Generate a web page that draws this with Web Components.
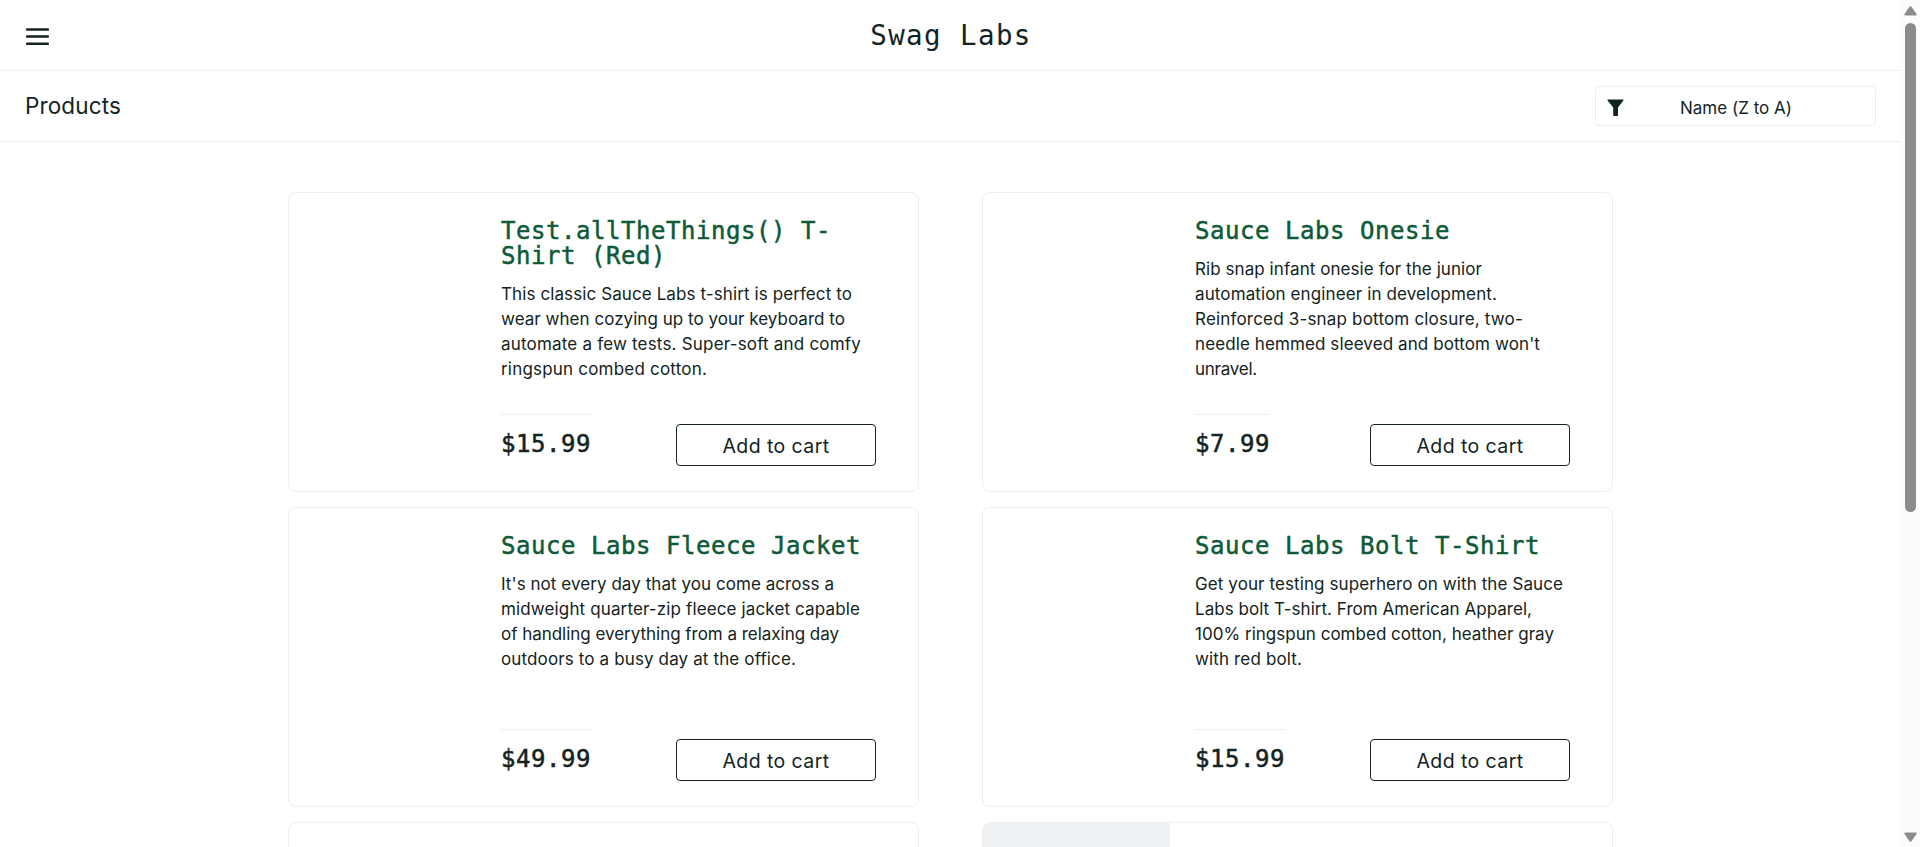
<!DOCTYPE html>
<html lang="en">
<head>
<meta charset="utf-8">
<title>Swag Labs</title>
<style>
html,body{margin:0;height:100%;overflow:hidden;background:#fff}
body{font-family:Inter,"Open Sans",sans-serif;color:#132322}
</style>
</head>
<body>
<swag-app></swag-app>
<script>
const define = (name, html, setup) => customElements.define(name, class extends HTMLElement {
  connectedCallback() {
    if (this.shadowRoot) return;
    const t = document.createElement('template');
    t.innerHTML = html;
    this.attachShadow({mode: 'open'}).append(t.content.cloneNode(true));
    if (setup) setup(this, this.shadowRoot);
  }
});

// One line of text, tracked so that it spans the width given in "w".
define('fit-line', `<style>:host{display:block;white-space:nowrap}span{display:inline-block}</style><span><slot></slot></span>`, (el, root) => {
  const span = root.querySelector('span');
  const n = el.textContent.length;
  const diff = Number(el.getAttribute('w')) - span.getBoundingClientRect().width;
  span.style.letterSpacing = (diff / n).toFixed(4) + 'px';
});

define('burger-icon', `<style>:host{display:block;width:24px;height:18px}svg{display:block}</style>
<svg width="24" height="18" viewBox="0 0 24 18" fill="#132322"><rect y=".2" width="23" height="2.5" rx="1"/><rect y="7.3" width="23" height="2.5" rx="1"/><rect y="14.5" width="23" height="2.5" rx="1"/></svg>`);

define('top-bar', `<style>:host{display:grid;grid-template-columns:1fr auto 1fr;height:70px;border-bottom:1px solid #ededed;padding:0 25px 0 26px}
burger-icon{margin-top:28px}
.logo{font:27.5px/36px "DejaVu Sans Mono",monospace;letter-spacing:1.4px;margin-top:17px;height:36px}</style>
<burger-icon></burger-icon><div class="logo">Swag Labs</div><span></span>`);

define('sort-select', `<style>:host{display:flex;box-sizing:border-box;width:281px;height:40px;border:1px solid #ededed;border-radius:4px;font-size:17px;line-height:42px}
svg{display:block;margin:12px 56px 0 11px;flex:none}</style>
<svg width="17" height="18" viewBox="0 0 17 18"><path d="M1 .5H16Q17 .5 16.4 1.4L11 8.6V16.2Q11 17 10.2 17H7Q6.2 17 6.2 16.2V8.6L.6 1.4Q0 .5 1 .5Z" fill="#132322"/></svg><fit-line w="112">Name (Z to A)</fit-line>`);

define('sub-bar', `<style>:host{display:flex;justify-content:space-between;height:70px;border-bottom:1px solid #ededed;padding:0 25px 0 25px;font-size:22.5px;line-height:28px}
.t{margin-top:21px}sort-select{margin-top:15px}</style>
<fit-line class="t" w="96">Products</fit-line><sort-select></sort-select>`);

define('cart-button', `<style>:host{display:block}button{all:unset;box-sizing:border-box;display:flex;justify-content:center;width:200px;height:42px;border:1px solid #132322;border-radius:4px;font-size:19.5px;line-height:42px}</style>
<button><fit-line w="107">Add to cart</fit-line></button>`);

define('product-card', `<style>:host{display:flex;box-sizing:border-box;width:631px;height:300px;border:1px solid #ededed;border-radius:8px;overflow:hidden;background:#fff}
.img{width:187px;flex:none}:host([tinted]) .img{background:#eef2f4}
.body{display:flex;flex-direction:column;flex:1;padding:26px 42px 25px 25px}
.name{color:#0f5a38;font:24px/25px "DejaVu Sans Mono",monospace;letter-spacing:.55px;-webkit-text-stroke:.5px;text-indent:0;white-space:pre-line}
.desc{font-size:17px;line-height:25px;margin-top:13px}
.foot{display:flex;justify-content:space-between;margin-top:auto;height:52px}
.price{border-top:1px solid #ededed;font:24px/25px "DejaVu Sans Mono",monospace;letter-spacing:.55px;-webkit-text-stroke:.5px;padding-top:17px;height:25px}
cart-button{margin-top:10px}</style>
<div class="img"></div><div class="body"><div class="name"></div><div class="desc"><slot></slot></div><div class="foot"><div class="price"></div><cart-button></cart-button></div></div>`, (el, root) => {
  if (!el.hasAttribute('name')) { root.querySelector('.body').remove(); return; }
  root.querySelector('.name').textContent = el.getAttribute('name');
  root.querySelector('.price').textContent = el.getAttribute('price');
});

define('scroll-bar', `<style>:host{display:flex;flex-direction:column;align-items:center;box-sizing:border-box;width:19px;height:847px;background:#fcfcfc;padding:6px 0 5px}
i{width:11px;height:489px;border-radius:6px;background:#8b8b8b;margin-top:7px}svg{display:block}.d{margin-top:auto}</style>
<svg width="13" height="10" viewBox="0 0 13 10" fill="#8b8b8b"><path d="M5.3 1Q6.5-.5 7.7 1L12.5 8Q13.2 9.6 11.6 9.6H1.4Q-.2 9.6.5 8Z"/></svg><i></i>
<svg class="d" width="13" height="10" viewBox="0 0 13 10" fill="#8b8b8b"><path d="M5.3 9Q6.5 10.5 7.7 9L12.5 2Q13.2.4 11.6.4H1.4Q-.2.4.5 2Z"/></svg>`);

define('swag-app', `<style>:host{display:flex;height:847px;overflow:hidden}
main{width:1901px;flex:none}
.list{display:grid;grid-template-columns:631px 631px;column-gap:63px;row-gap:15px;padding:50px 0 0 288px}</style>
<main><top-bar></top-bar><sub-bar></sub-bar><div class="list">
<product-card name="Test.allTheThings() T-
Shirt (Red)" price="$15.99"><fit-line w="351">This classic Sauce Labs t-shirt is perfect to</fit-line><fit-line w="344">wear when cozying up to your keyboard to</fit-line><fit-line w="360">automate a few tests. Super-soft and comfy</fit-line><fit-line w="206">ringspun combed cotton.</fit-line></product-card>
<product-card name="Sauce Labs Onesie" price="$7.99"><fit-line w="287">Rib snap infant onesie for the junior</fit-line><fit-line w="302">automation engineer in development.</fit-line><fit-line w="328">Reinforced 3-snap bottom closure, two-</fit-line><fit-line w="345">needle hemmed sleeved and bottom won't</fit-line><fit-line w="62">unravel.</fit-line></product-card>
<product-card name="Sauce Labs Fleece Jacket" price="$49.99"><fit-line w="333">It's not every day that you come across a</fit-line><fit-line w="359">midweight quarter-zip fleece jacket capable</fit-line><fit-line w="338">of handling everything from a relaxing day</fit-line><fit-line w="295">outdoors to a busy day at the office.</fit-line></product-card>
<product-card name="Sauce Labs Bolt T-Shirt" price="$15.99"><fit-line w="368">Get your testing superhero on with the Sauce</fit-line><fit-line w="337">Labs bolt T-shirt. From American Apparel,</fit-line><fit-line w="359">100% ringspun combed cotton, heather gray</fit-line><fit-line w="107">with red bolt.</fit-line></product-card>
<product-card></product-card><product-card tinted></product-card>
</div></main><scroll-bar></scroll-bar>`);
</script>
</body>
</html>
